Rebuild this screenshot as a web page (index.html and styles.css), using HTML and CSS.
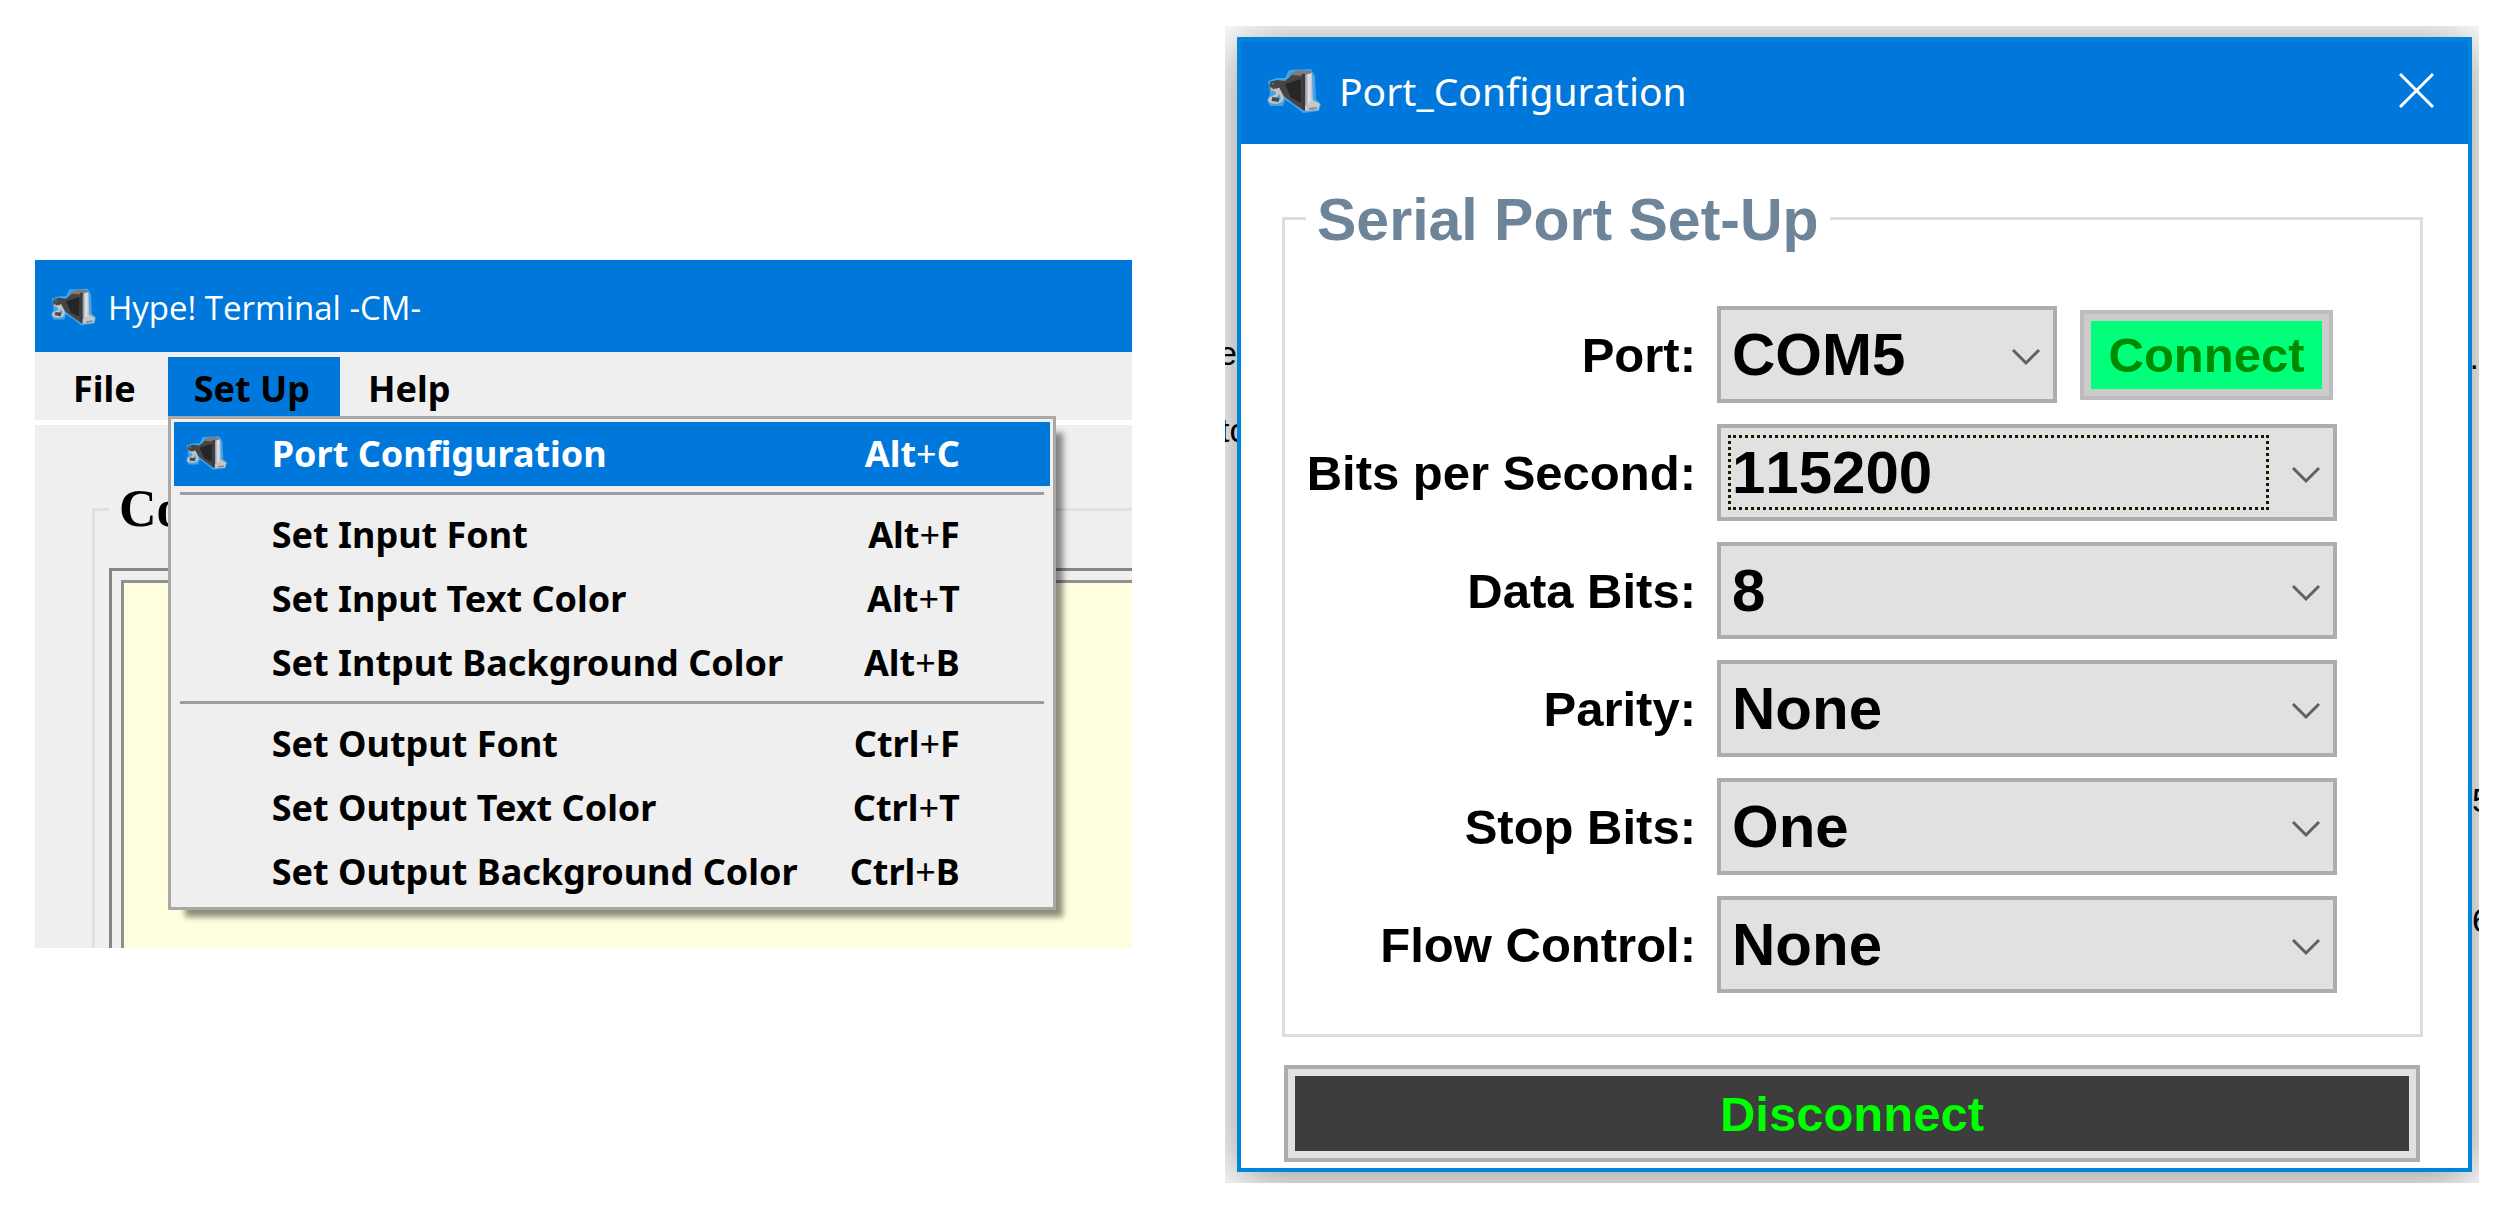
FILE: index.html
```html
<!DOCTYPE html>
<html lang="en">

<head>
  <meta charset="UTF-8">
  <meta name="viewport" content="width=device-width, initial-scale=1.0">
  <title>Hype! Terminal - Port Configuration</title>
  <link rel="stylesheet" href="styles.css">
</head>

<body>
  <!-- shared serial plug icon -->
  <svg width="0" height="0" class="defs">
    <defs>
      <linearGradient id="metal" x1="0" y1="0" x2="1" y2="0">
        <stop offset="0" stop-color="#8c8c94"></stop>
        <stop offset="0.5" stop-color="#e6e6f0"></stop>
        <stop offset="1" stop-color="#b4b4be"></stop>
      </linearGradient>
      <symbol id="plug" viewBox="0 0 54 44">
        <path class="plug-glow" d="M22 1 L44 0 L48 7 L49 30 L54 35 L52 42 L36 44 L26 36 L18 31 L16 37 L3 37 L0 31 L3 25 L1 12 L10 9 L18 9 Z"></path>
        <path d="M24 4 L32 1 L44 2 L44 8 L34 10 L22 9 Z" fill="#7d7d7d"></path>
        <path d="M3 13 L10 11 L18 12 L25 6 L36 7 L36 41 L27 35 L18 28 L12 22 L3 21 Z" fill="#454545"></path>
        <path d="M18 15 L34 10 L34 34 L24 29 Z" fill="#262626"></path>
        <path d="M5 14 L5 20 C10 21 12 24 9 27 C5 29 2 29 3 32 C6 34 14 34 15 30 C16 26 12 23 11 19" fill="none" stroke="#c4c4c4" stroke-width="3"></path>
        <path d="M3 15 L8 19 M5 30 L12 31" stroke="#4a4a4a" stroke-width="4"></path>
        <path d="M38 6 L45 4 L46 34 L38 38 Z" fill="url(#metal)"></path>
        <path d="M35 5 L38 5 L38 42 L35 40 Z" fill="#3a3a3a"></path>
        <path d="M38 37 L46 31 L53 35 L51 41 L38 42 Z" fill="#c6c6c6"></path>
        <path d="M42 40 L50 39" stroke="#8a8a8a" stroke-width="2"></path>
      </symbol>
    </defs>
  </svg>

  <main class="page">
    <section class="terminal">
      <header class="terminal-title">
        <svg class="title-icon-small"><use href="#plug"></use></svg>
        <span>Hype! Terminal -CM-</span>
      </header>
      <nav class="menubar">
        <div class="menu"><button type="button">File</button></div>
        <div class="menu open">
          <button type="button">Set Up</button>
          <ul class="dropdown">
            <li><button type="button" class="selected"><svg><use href="#plug"></use></svg><span>Port Configuration</span><kbd>Alt<i>+</i>C</kbd></button></li>
            <li class="separator"></li>
            <li><button type="button"><span>Set Input Font</span><kbd>Alt<i>+</i>F</kbd></button></li>
            <li><button type="button"><span>Set Input Text Color</span><kbd>Alt<i>+</i>T</kbd></button></li>
            <li><button type="button"><span>Set Intput Background Color</span><kbd>Alt<i>+</i>B</kbd></button></li>
            <li class="separator"></li>
            <li><button type="button"><span>Set Output Font</span><kbd>Ctrl<i>+</i>F</kbd></button></li>
            <li><button type="button"><span>Set Output Text Color</span><kbd>Ctrl<i>+</i>T</kbd></button></li>
            <li><button type="button"><span>Set Output Background Color</span><kbd>Ctrl<i>+</i>B</kbd></button></li>
          </ul>
        </div>
        <div class="menu"><button type="button">Help</button></div>
      </nav>
      <fieldset class="command-group">
        <legend>Co</legend>
        <div class="command-box">
          <textarea aria-label="Command input"></textarea>
        </div>
      </fieldset>
    </section>

    <section class="backdrop">
      <!-- bits of the page behind the dialog -->
      <span class="behind behind-1">e</span>
      <span class="behind behind-2">to</span>
      <span class="behind behind-3">.</span>
      <span class="behind behind-4">5</span>
      <span class="behind behind-5">6</span>

      <form class="dialog">
        <header class="dialog-title">
          <svg class="title-icon"><use href="#plug"></use></svg>
          <span>Port_Configuration</span>
          <button type="button" class="close" aria-label="Close">
            <svg viewBox="0 0 35 35"><path d="M1 1 L34 34 M34 1 L1 34"></path></svg>
          </button>
        </header>
        <div class="dialog-body">
          <fieldset class="serial">
            <legend>Serial Port Set-Up</legend>
            <div class="row">
              <label for="port">Port:</label>
              <div class="field">
                <div class="combo combo-port">
                  <select id="port"><option>COM5</option></select>
                  <svg viewBox="0 0 30 18"><path d="M2 2 L15 15 L28 2"></path></svg>
                </div>
                <button type="button" class="connect">Connect</button>
              </div>
            </div>
            <div class="row">
              <label for="baud">Bits per Second:</label>
              <div class="combo focused">
                <select id="baud"><option>115200</option></select>
                <svg viewBox="0 0 30 18"><path d="M2 2 L15 15 L28 2"></path></svg>
              </div>
            </div>
            <div class="row">
              <label for="data">Data Bits:</label>
              <div class="combo">
                <select id="data"><option>8</option></select>
                <svg viewBox="0 0 30 18"><path d="M2 2 L15 15 L28 2"></path></svg>
              </div>
            </div>
            <div class="row">
              <label for="parity">Parity:</label>
              <div class="combo">
                <select id="parity"><option>None</option></select>
                <svg viewBox="0 0 30 18"><path d="M2 2 L15 15 L28 2"></path></svg>
              </div>
            </div>
            <div class="row">
              <label for="stop">Stop Bits:</label>
              <div class="combo">
                <select id="stop"><option>One</option></select>
                <svg viewBox="0 0 30 18"><path d="M2 2 L15 15 L28 2"></path></svg>
              </div>
            </div>
            <div class="row">
              <label for="flow">Flow Control:</label>
              <div class="combo">
                <select id="flow"><option>None</option></select>
                <svg viewBox="0 0 30 18"><path d="M2 2 L15 15 L28 2"></path></svg>
              </div>
            </div>
          </fieldset>
          <button type="button" class="disconnect">Disconnect</button>
        </div>
      </form>
    </section>
  </main>
</body>

</html>
```
FILE: styles.css
```css
* {
  box-sizing: border-box;
}

body {
  margin: 0;
  background: #fff;
  color: #000;
  font-family: "Liberation Sans", Arial, sans-serif;
}

button {
  margin: 0;
  padding: 0;
  border: none;
  background: none;
  color: inherit;
  font: inherit;
}

fieldset {
  margin: 0;
  min-width: 0;
}

.defs {
  position: absolute;
}

.plug-glow {
  fill: #6cc3f0;
  opacity: 0.6;
}

.page {
  display: grid;
  grid-template-columns: 1097fr 1254fr;
  column-gap: 93px;
  align-items: start;
  padding: 26px 36px 30px 35px;
}

/* main terminal window */
.terminal {
  margin-top: 234px;
  background: #efefef;
  overflow: hidden;
}

.terminal-title {
  display: flex;
  align-items: center;
  gap: 12px;
  height: 92px;
  padding: 2px 0 0 16px;
  background: #0078db;
  color: #fff;
  font: 400 33px "Open Sans", sans-serif;
}

.title-icon-small {
  width: 45px;
  height: 38px;
}

.menubar {
  display: flex;
  gap: 2px;
  height: 73px;
  padding: 5px 0 9px 12px;
  border-bottom: 5px solid #fff;
  font: 700 36px "Noto Sans", sans-serif;
}

.menu {
  position: relative;
}

.menu > button {
  height: 59px;
  padding: 4px 30px 0 26px;
}

.menu.open > button {
  background: #0078db;
}

.dropdown {
  position: absolute;
  z-index: 2;
  top: 59px;
  left: 0;
  width: 888px;
  margin: 0;
  padding: 3px;
  border: 3px solid #a8a8a8;
  background: #efefef;
  box-shadow: 12px 12px 6px -5px rgba(0, 0, 0, 0.45);
  list-style: none;
}

.dropdown button {
  display: flex;
  align-items: center;
  position: relative;
  width: 100%;
  height: 64px;
  padding: 0 90px 2px 98px;
  text-align: left;
}

.dropdown svg {
  position: absolute;
  left: 12px;
  width: 41px;
  height: 34px;
}

.dropdown kbd {
  margin-left: auto;
  font: inherit;
}

.dropdown kbd i {
  font-style: normal;
  font-weight: 400;
}

.dropdown .selected {
  background: #0078db;
  color: #fff;
}

.separator {
  height: 3px;
  margin: 6px 6px 8px;
  background: #9c9c9c;
}

.command-group {
  margin: 58px 0 0 57px;
  padding: 33px 0 0 14px;
  border: 3px solid #e0e0e0;
  border-width: 3px 0 0 3px;
}

.command-group legend {
  padding: 0 10px;
  font: bold 52px/52px "Liberation Serif", serif;
}

.command-box {
  padding: 9px 0 0 9px;
  border: 3px solid #858585;
  border-width: 3px 0 0 3px;
}

.command-box textarea {
  display: block;
  width: 100%;
  height: 368px;
  border: 3px solid #909090;
  border-width: 3px 0 0 3px;
  background: #ffffe0;
  resize: none;
  outline: none;
}

/* port configuration dialog */
.backdrop {
  position: relative;
  padding: 11px 7px 11px 12px;
  overflow: hidden;
}

.behind {
  position: absolute;
  font-size: 34px;
  line-height: 34px;
}

.behind-1 {
  top: 310px;
  left: -7px;
}

.behind-2 {
  top: 387px;
  left: -5px;
}

.behind-3 {
  top: 314px;
  right: 0;
}

.behind-4 {
  top: 757px;
  right: -12px;
}

.behind-5 {
  top: 877px;
  right: -12px;
}

.dialog {
  position: relative;
  border: 4px solid #0085dc;
  background: #fff;
  box-shadow: 0 6px 50px rgba(0, 0, 0, 0.45);
}

.dialog-title {
  display: flex;
  align-items: center;
  gap: 18px;
  height: 103px;
  padding: 0 34px 4px 26px;
  background: #0078db;
  color: #fff;
  font: 400 39px "Noto Sans", sans-serif;
}

.title-icon {
  width: 54px;
  height: 44px;
}

.close {
  margin-left: auto;
}

.close svg {
  display: block;
  width: 35px;
  height: 35px;
}

.close path {
  fill: none;
  stroke: #fff;
  stroke-width: 3;
}

.dialog-body {
  padding: 42px 45px 6px 41px;
  font-weight: bold;
  font-size: 49px;
}

.serial {
  padding: 56px 83px 41px 19px;
  border: 3px solid #ddd;
}

.serial legend {
  margin-left: 2px;
  padding: 4px 11px 0;
  color: #6d8499;
  font-size: 59px;
  line-height: 60px;
}

.row {
  display: grid;
  grid-template-columns: 1fr 620px;
  column-gap: 21px;
  align-items: center;
  margin-bottom: 21px;
}

.row:last-child {
  margin-bottom: 0;
}

.row label {
  text-align: right;
}

.field {
  display: flex;
  align-items: center;
  gap: 23px;
}

.combo {
  position: relative;
}

.combo-port {
  width: 340px;
}

.combo select {
  display: block;
  width: 100%;
  height: 97px;
  padding: 0 11px;
  border: 4px solid #adadad;
  border-radius: 0;
  background: #e1e1e1;
  color: #000;
  font: inherit;
  font-size: 60px;
  font-kerning: none;
  appearance: none;
  outline: none;
}

.combo svg {
  position: absolute;
  right: 16px;
  top: 42px;
  width: 30px;
  height: 18px;
}

.combo path {
  fill: none;
  stroke: #606060;
  stroke-width: 3;
}

/* focus rectangle around the current value */
.combo.focused::after {
  content: "";
  position: absolute;
  top: 11px;
  right: 68px;
  bottom: 11px;
  left: 11px;
  border: 3px dotted #1a1a00;
  pointer-events: none;
}

.connect,
.disconnect {
  border: 4px solid #adadad;
  box-shadow: inset 0 0 0 7px #e1e1e1;
}

.connect {
  width: 253px;
  height: 90px;
  border-color: #bdbdbd;
  background: #00ff7b;
  box-shadow: inset 0 0 0 7px #ccc;
  color: #008a00;
}

.disconnect {
  display: block;
  width: calc(100% - 5px);
  height: 97px;
  margin: 28px 3px 0 2px;
  background: #3d3d3d;
  color: #0f0;
}
```
